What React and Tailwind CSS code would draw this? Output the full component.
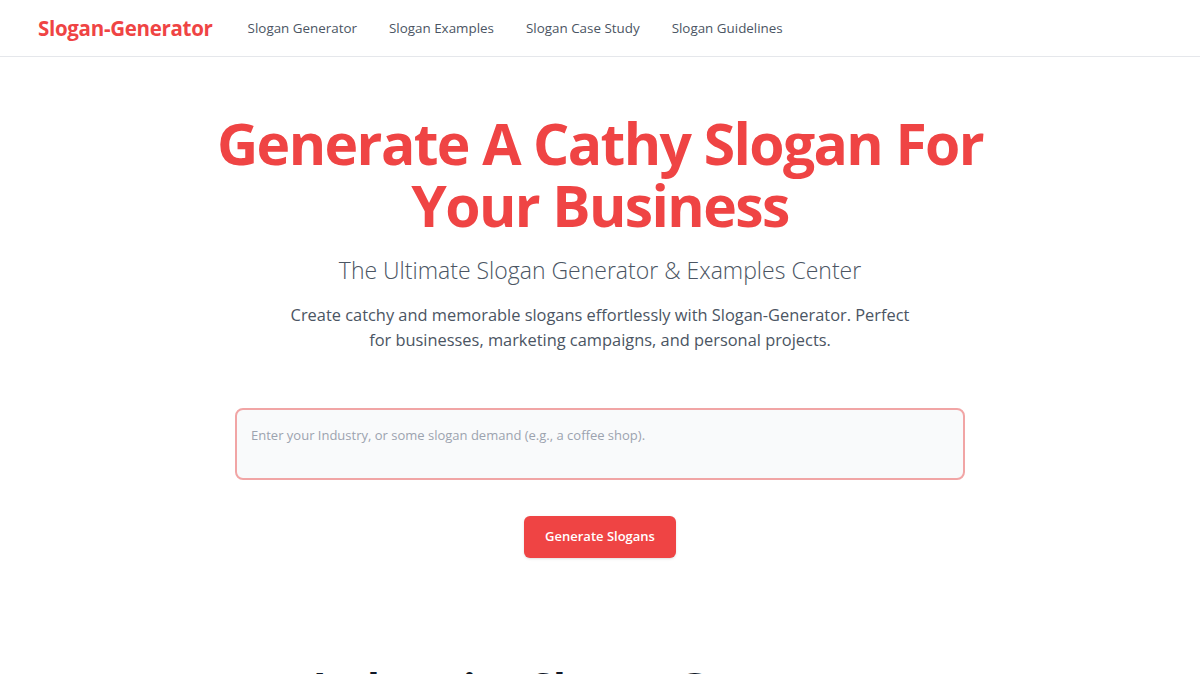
import { useState } from "react";

const NAV = ["Slogan Generator", "Slogan Examples", "Slogan Case Study", "Slogan Guidelines"];

export default function App() {
  const [demand, setDemand] = useState("");

  return (
    <div className="min-h-screen bg-white font-['Open_Sans',sans-serif] text-[#1f2937]">
      {/* ================= HEADER ================= */}
      <header className="h-[57px] border-b border-[#e5e7eb] flex items-center px-[38px]">
        <a href="#" className="text-[20.5px] font-bold text-[#ef4444] tracking-[-0.3px]">
          Slogan-Generator
        </a>
        <nav className="ml-[35px] flex items-center gap-8">
          {NAV.map((item) => (
            <a key={item} href="#" className="text-[13.4px] text-[#4b5563] hover:text-[#ef4444]">
              {item}
            </a>
          ))}
        </nav>
      </header>

      {/* ================= HERO ================= */}
      <main className="px-6">
        <section className="pt-[55px] text-center">
          <h1 className="mx-auto max-w-[820px] text-[57px] leading-[62px] font-bold text-[#ef4444] tracking-[-1.6px]">
            Generate A Cathy Slogan For Your Business
          </h1>
          <h2 className="mt-[18px] text-[23px] leading-8 font-light text-[#4b5563]">
            The Ultimate Slogan Generator &amp; Examples Center
          </h2>
          <p className="mt-4 mx-auto max-w-[640px] text-[16.4px] leading-[25px] text-[#4b5563]">
            Create catchy and memorable slogans effortlessly with Slogan-Generator. Perfect for
            businesses, marketing campaigns, and personal projects.
          </p>
        </section>

        <section className="mt-14 flex flex-col items-center">
          <textarea
            value={demand}
            onChange={(e) => setDemand(e.target.value)}
            placeholder="Enter your Industry, or some slogan demand (e.g., a coffee shop)."
            className="w-[730px] h-[72px] resize-none rounded-lg border-2 border-[#f1a5a5] bg-[#f9fafb] px-[14px] py-[16px] text-[13px] text-[#374151] placeholder-[#9ca3af] focus:outline-none"
          />
          <button className="mt-9 h-[42px] w-[152px] rounded-md bg-[#ef4444] text-[13px] font-semibold text-white shadow-sm hover:bg-[#dc2626]">
            Generate Slogans
          </button>
        </section>

        <section className="mt-[101px] text-center">
          <h2 className="text-[42px] leading-[56px] font-bold text-[#111827] tracking-[-0.5px]">
            Industries Slogan Generator
          </h2>
        </section>
      </main>
    </div>
  );
}
